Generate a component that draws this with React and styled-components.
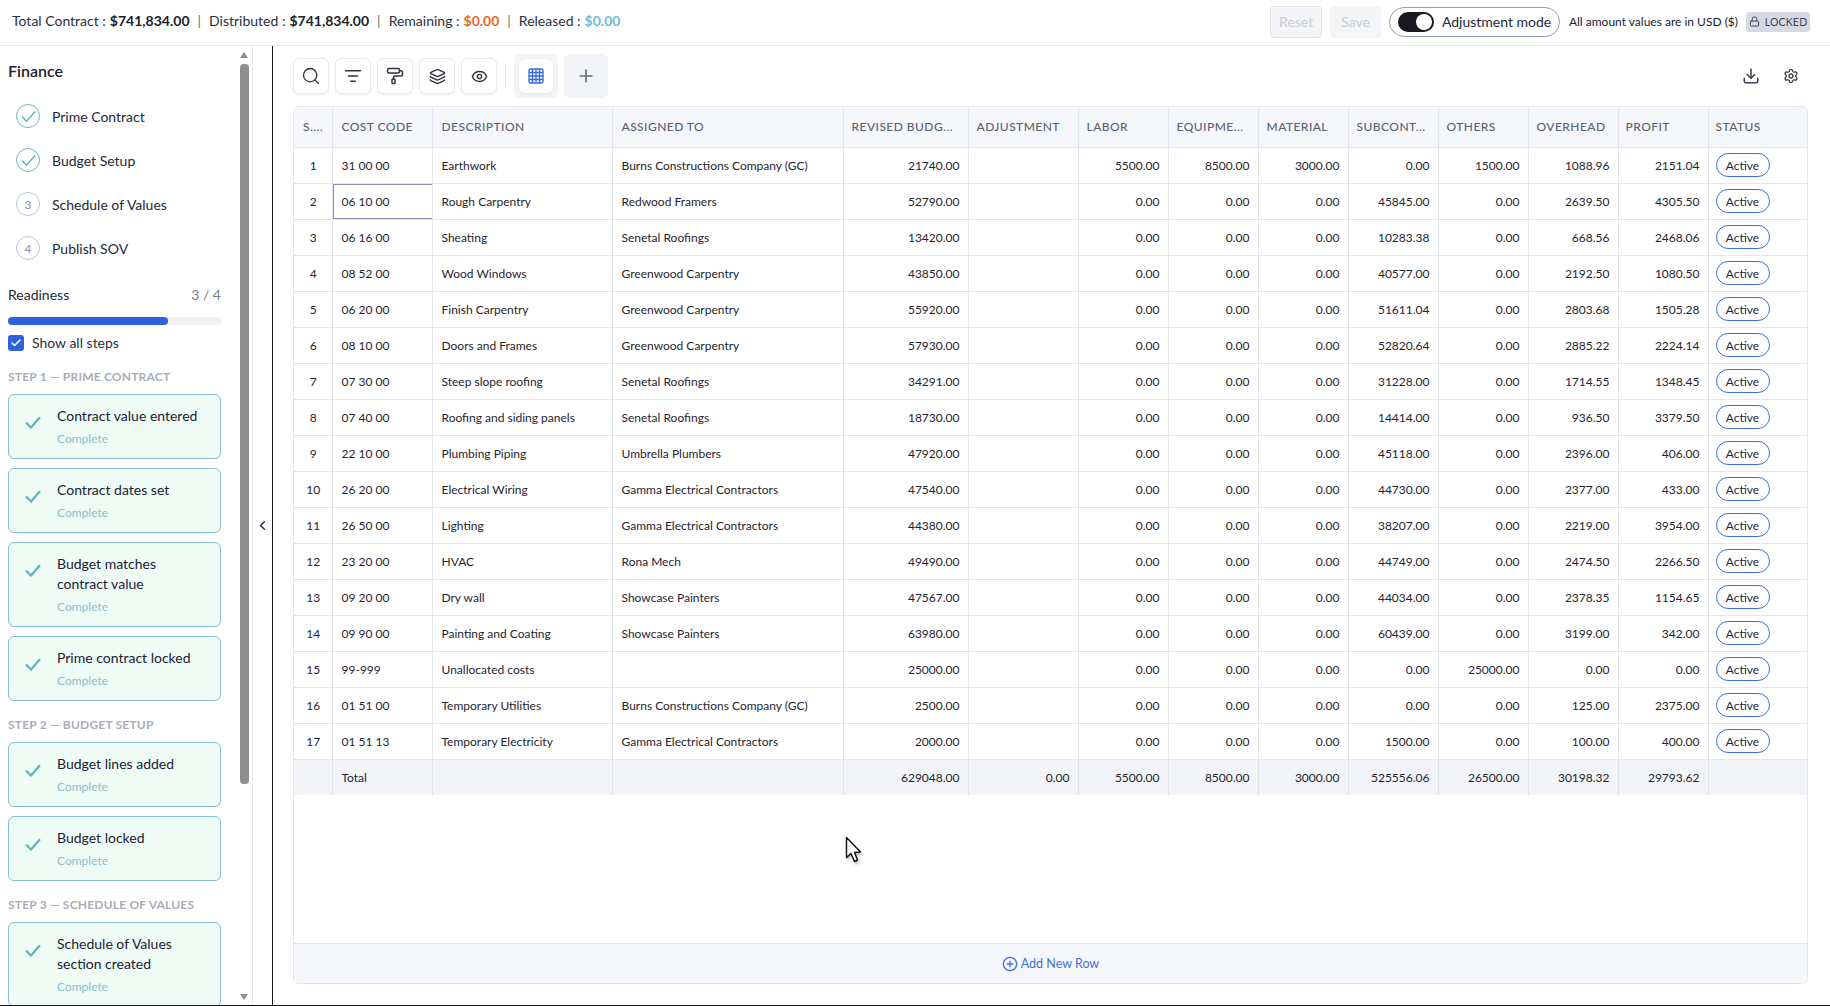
import React from 'react'
import styled, { createGlobalStyle } from 'styled-components'
import {
  Search, ListFilter, PaintRoller, Layers, Eye, Plus, Download, Settings,
  Lock, ChevronLeft, Check, CirclePlus,
} from 'lucide-react'

const rows = [
  ['31 00 00', 'Earthwork', 'Burns Constructions Company (GC)', '21740.00', '5500.00', '8500.00', '3000.00', '0.00', '1500.00', '1088.96', '2151.04'],
  ['06 10 00', 'Rough Carpentry', 'Redwood Framers', '52790.00', '0.00', '0.00', '0.00', '45845.00', '0.00', '2639.50', '4305.50'],
  ['06 16 00', 'Sheating', 'Senetal Roofings', '13420.00', '0.00', '0.00', '0.00', '10283.38', '0.00', '668.56', '2468.06'],
  ['08 52 00', 'Wood Windows', 'Greenwood Carpentry', '43850.00', '0.00', '0.00', '0.00', '40577.00', '0.00', '2192.50', '1080.50'],
  ['06 20 00', 'Finish Carpentry', 'Greenwood Carpentry', '55920.00', '0.00', '0.00', '0.00', '51611.04', '0.00', '2803.68', '1505.28'],
  ['08 10 00', 'Doors and Frames', 'Greenwood Carpentry', '57930.00', '0.00', '0.00', '0.00', '52820.64', '0.00', '2885.22', '2224.14'],
  ['07 30 00', 'Steep slope roofing', 'Senetal Roofings', '34291.00', '0.00', '0.00', '0.00', '31228.00', '0.00', '1714.55', '1348.45'],
  ['07 40 00', 'Roofing and siding panels', 'Senetal Roofings', '18730.00', '0.00', '0.00', '0.00', '14414.00', '0.00', '936.50', '3379.50'],
  ['22 10 00', 'Plumbing Piping', 'Umbrella Plumbers', '47920.00', '0.00', '0.00', '0.00', '45118.00', '0.00', '2396.00', '406.00'],
  ['26 20 00', 'Electrical Wiring', 'Gamma Electrical Contractors', '47540.00', '0.00', '0.00', '0.00', '44730.00', '0.00', '2377.00', '433.00'],
  ['26 50 00', 'Lighting', 'Gamma Electrical Contractors', '44380.00', '0.00', '0.00', '0.00', '38207.00', '0.00', '2219.00', '3954.00'],
  ['23 20 00', 'HVAC', 'Rona Mech', '49490.00', '0.00', '0.00', '0.00', '44749.00', '0.00', '2474.50', '2266.50'],
  ['09 20 00', 'Dry wall', 'Showcase Painters', '47567.00', '0.00', '0.00', '0.00', '44034.00', '0.00', '2378.35', '1154.65'],
  ['09 90 00', 'Painting and Coating', 'Showcase Painters', '63980.00', '0.00', '0.00', '0.00', '60439.00', '0.00', '3199.00', '342.00'],
  ['99-999', 'Unallocated costs', '', '25000.00', '0.00', '0.00', '0.00', '0.00', '25000.00', '0.00', '0.00'],
  ['01 51 00', 'Temporary Utilities', 'Burns Constructions Company (GC)', '2500.00', '0.00', '0.00', '0.00', '0.00', '0.00', '125.00', '2375.00'],
  ['01 51 13', 'Temporary Electricity', 'Gamma Electrical Contractors', '2000.00', '0.00', '0.00', '0.00', '1500.00', '0.00', '100.00', '400.00'],
]

const totals = ['629048.00', '0.00', '5500.00', '8500.00', '3000.00', '525556.06', '26500.00', '30198.32', '29793.62']
const widths = [38, 100, 180, 231, 125, 110, 90, 90, 90, 90, 90, 90, 90, 99]
const headers = ['S....', 'COST CODE', 'DESCRIPTION', 'ASSIGNED TO', 'REVISED BUDG...', 'ADJUSTMENT', 'LABOR', 'EQUIPME...', 'MATERIAL', 'SUBCONT...', 'OTHERS', 'OVERHEAD', 'PROFIT', 'STATUS']

const steps = [
  { label: 'Prime Contract', done: true },
  { label: 'Budget Setup', done: true },
  { label: 'Schedule of Values', num: 3 },
  { label: 'Publish SOV', num: 4 },
]

const groups = [
  { title: 'STEP 1 — PRIME CONTRACT', cards: ['Contract value entered', 'Contract dates set', 'Budget matches contract value', 'Prime contract locked'] },
  { title: 'STEP 2 — BUDGET SETUP', cards: ['Budget lines added', 'Budget locked'] },
  { title: 'STEP 3 — SCHEDULE OF VALUES', cards: ['Schedule of Values section created'] },
]

const GlobalStyle = createGlobalStyle`
  html, body { margin: 0; padding: 0; background: #fff; overflow: hidden; }
  * { box-sizing: border-box; }
  body { font-family: Lato, "Liberation Sans", sans-serif; color: #1f2433; }
`

const Page = styled.div`
  position: relative;
  width: 1830px;
  height: 1006px;
  display: flex;
  flex-direction: column;
  overflow: hidden;
  border-bottom: 1px solid #14161c;
`
const TopBar = styled.header`
  height: 46px;
  flex: none;
  display: flex;
  align-items: center;
  padding: 0 20px 2px 12px;
  border-bottom: 1px solid #e6e8ef;
`
const Summary = styled.div`
  flex: 1;
  display: flex;
  align-items: center;
  padding-bottom: 2px;
  font-size: 14px;
  color: #2b3040;
`
const Amount = styled.b`
  font-weight: 700;
  margin-left: 4px;
  color: ${(p) => p.$color || '#1c2130'};
`
const Sep = styled.span`
  margin: 0 8px;
  color: #6b7280;
`
const ActionButton = styled.div`
  height: 32px;
  padding: 0 ${(p) => (p.$outlined ? 8 : 10)}px;
  margin-right: 8px;
  display: flex;
  align-items: center;
  font-size: 14px;
  color: #c9ccd3;
  background: #f4f5f7;
  border-radius: 4px;
  border: 1px solid ${(p) => (p.$outlined ? '#dfe2e9' : '#f4f5f7')};
`
const ModePill = styled.div`
  height: 30px;
  width: 171px;
  display: flex;
  align-items: center;
  gap: 8px;
  padding-left: 8px;
  border: 1px solid #93a0bb;
  border-radius: 15px;
  font-size: 14px;
  white-space: nowrap;
  color: #20283a;
`
const Switch = styled.span`
  width: 36px;
  height: 20px;
  flex: none;
  border-radius: 10px;
  background: #16181d;
  display: flex;
  align-items: center;
  justify-content: flex-end;
  padding-right: 2px;
`
const Knob = styled.span`
  width: 16px;
  height: 16px;
  border-radius: 50%;
  background: #fff;
`
const UsdNote = styled.div`
  margin-left: 9px;
  font-size: 12px;
  color: #1c2130;
`
const LockedBadge = styled.div`
  margin-left: 8px;
  height: 20px;
  width: 64px;
  display: flex;
  align-items: center;
  justify-content: center;
  gap: 5px;
  background: #d5d9e3;
  border-radius: 3px;
  font-size: 10.5px;
  letter-spacing: 0.2px;
  color: #3b4254;
`
const Body = styled.div`
  flex: 1;
  min-height: 0;
  display: flex;
`
const Sidebar = styled.aside`
  width: 253px;
  flex: none;
  display: flex;
  border-right: 1px solid #e8eaf1;
`
const SideContent = styled.div`
  width: 240px;
  flex: none;
  overflow: hidden;
  padding: 15px 19px 0 8px;
`
const ScrollTrack = styled.div`
  width: 12px;
  display: flex;
  flex-direction: column;
  align-items: flex-start;
  padding-top: 6px;
`
const ArrowUp = styled.span`
  width: 0;
  height: 0;
  border-left: 4.5px solid transparent;
  border-right: 4.5px solid transparent;
  border-bottom: 6px solid #8f8f8f;
`
const ArrowDown = styled.span`
  width: 0;
  height: 0;
  margin-top: auto;
  margin-bottom: 5px;
  border-left: 4.5px solid transparent;
  border-right: 4.5px solid transparent;
  border-top: 6px solid #8f8f8f;
`
const ScrollThumb = styled.div`
  width: 9px;
  height: 720px;
  margin-top: 6px;
  background: #8f8f8f;
  border-radius: 4px;
`
const SideTitle = styled.h2`
  margin: 0 0 23px;
  font-size: 16px;
  line-height: 20px;
  font-weight: 600;
  color: #1c2130;
`
const StepList = styled.div`
  display: flex;
  flex-direction: column;
  gap: 20px;
`
const StepRow = styled.div`
  height: 24px;
  display: flex;
  align-items: center;
  gap: 12px;
  padding-left: 8px;
  font-size: 14px;
  color: #232838;
`
const StepDot = styled.span`
  width: 24px;
  height: 24px;
  flex: none;
  border-radius: 50%;
  display: flex;
  align-items: center;
  justify-content: center;
  font-size: 12px;
  color: #8b92a3;
  border: 1px solid ${(p) => (p.$done ? '#6bb7bd' : '#b9c6dc')};
`
const ReadyRow = styled.div`
  margin-top: 26px;
  display: flex;
  justify-content: space-between;
  font-size: 14px;
  line-height: 18px;
  color: #232838;
`
const ReadyCount = styled.span`
  color: #767d8c;
`
const ProgressTrack = styled.div`
  margin-top: 13px;
  height: 8px;
  border-radius: 4px;
  background: #f1f2f5;
`
const ProgressFill = styled.div`
  height: 100%;
  border-radius: 4px;
  background: #2f62dc;
`
const ShowRow = styled.label`
  margin: 9px 0 18px;
  display: flex;
  align-items: center;
  gap: 8px;
  font-size: 14px;
  height: 17px;
  color: #2b3040;
`
const CheckBox = styled.span`
  width: 16px;
  height: 16px;
  border-radius: 3px;
  background: #2f62dc;
  display: flex;
  align-items: center;
  justify-content: center;
  color: #fff;
`
const GroupTitle = styled.div`
  margin: 16px 0 9px;
  font-size: 12px;
  line-height: 16px;
  font-weight: 700;
  letter-spacing: 0.2px;
  color: #a9adb9;
`
const CardList = styled.div`
  display: flex;
  flex-direction: column;
  gap: 9px;
`
const Card = styled.div`
  display: flex;
  gap: 16px;
  padding: 11px 20px 11px 16px;
  background: #effcf5;
  border: 1px solid #86bfce;
  border-radius: 6px;
`
const CheckWrap = styled.span`
  flex: none;
  display: flex;
  margin-top: 10px;
  height: 13px;
`
const CardText = styled.div`
  min-width: 0;
`
const CardTitle = styled.div`
  font-size: 14px;
  line-height: 20px;
  color: #1b2036;
`
const CardStatus = styled.div`
  margin-top: 5px;
  font-size: 12px;
  line-height: 16px;
  color: #8dbccb;
`
const Collapse = styled.div`
  width: 19px;
  flex: none;
  display: flex;
  align-items: center;
  justify-content: center;
  color: #27345c;
`
const Main = styled.main`
  flex: 1;
  min-width: 0;
  display: flex;
  flex-direction: column;
  padding: 8px 22px 21px 20px;
  border-left: 1px solid #14161c;
`
const Toolbar = styled.div`
  height: 44px;
  flex: none;
  margin-bottom: 8px;
  display: flex;
  align-items: center;
  gap: 6px;
`
const ToolButton = styled.div`
  width: ${(p) => (p.$active ? 34 : 36)}px;
  height: ${(p) => (p.$active ? 34 : 36)}px;
  display: flex;
  align-items: center;
  justify-content: center;
  background: #fff;
  border: ${(p) => (p.$active ? 'none' : '1px solid #e8eaf0')};
  border-radius: 6px;
  box-shadow: 0 1px 2px rgba(40, 50, 80, 0.08);
  color: #30353f;
`
const Divider = styled.span`
  width: 1px;
  height: 24px;
  margin: 0 2px;
  background: #e8eaf0;
`
const ToolGroup = styled.div`
  width: 44px;
  height: 44px;
  display: flex;
  align-items: center;
  justify-content: center;
  background: #f3f4f7;
  border-radius: 6px;
  color: #666c78;
`
const ToolEnd = styled.div`
  margin-left: auto;
  display: flex;
  align-items: center;
  gap: 23px;
  padding-right: 9px;
  color: #3a404c;
`
const TableCard = styled.div`
  flex: 1;
  min-height: 0;
  display: flex;
  flex-direction: column;
  border: 1px solid #e4e6ef;
  border-radius: 6px;
  overflow: hidden;
`
const TableArea = styled.div`
  flex: 1;
  min-height: 0;
`
const Grid = styled.table`
  width: 100%;
  table-layout: fixed;
  border-collapse: collapse;
  font-size: 12px;
  color: #1f2430;
`
const Th = styled.th`
  height: 40px;
  padding: 0 8px;
  text-align: left;
  font-size: 12px;
  font-weight: 500;
  letter-spacing: 0.45px;
  white-space: nowrap;
  overflow: hidden;
  color: #5a6272;
  background: #f6f7fa;
  border: 1px solid #e4e6ef;
  border-top: none;
  &:first-child { border-left: none; }
  &:last-child { border-right: none; }
  &:nth-child(-n+4) { padding-left: 9px; }
  &:nth-child(n+13) { padding-left: 7px; }
`
const Td = styled.td`
  height: 36px;
  padding: 0 8px;
  white-space: nowrap;
  overflow: hidden;
  text-align: ${(p) => p.$align || 'left'};
  border: 1px solid #e4e6ef;
  &:first-child { border-left: none; }
  &:last-child { border-right: none; }
  &:nth-child(-n+4) { padding-left: 9px; }
  &:last-child { padding-left: 7px; }
  ${(p) => p.$selected && 'box-shadow: inset 1px 1px 0 #8e90b5, inset 0 -1px 0 #8e90b5;'}
`
const TotalRow = styled.tr`
  background: #f3f4f7;
  color: #20242f;
  td { border-bottom: none; border-color: #e1e3ea; }
`
const StatusPill = styled.span`
  display: inline-flex;
  align-items: center;
  justify-content: center;
  width: 54px;
  height: 24px;
  border: 1px solid #3b6fdc;
  border-radius: 12px;
  color: #232a3a;
`
const AddRow = styled.div`
  height: 40px;
  flex: none;
  display: flex;
  align-items: center;
  justify-content: center;
  gap: 3px;
  font-size: 12.5px;
  color: #3f6fdc;
  background: #f6f7fa;
  border-top: 1px solid #e4e6ef;
`
const Cursor = styled.svg`
  position: absolute;
  left: 845px;
  top: 836px;
  filter: drop-shadow(1px 2px 1px rgba(0, 0, 0, 0.25));
`

const GridIcon = () => (
  <svg width="16" height="16" viewBox="0 0 16 16" fill="none" stroke="#3467e0" strokeWidth="1.3">
    <rect x="1" y="1" width="14" height="14" rx="1.5" />
    <path d="M4.5 1v14M8 1v14M11.5 1v14M1 4.5h14M1 8h14M1 11.5h14" />
  </svg>
)

const TealCheck = ({ width = 16, weight = 2.2 }) => (
  <svg width={width} height="13" viewBox="0 0 16 13" fill="none" stroke="#62b3b8" strokeWidth={weight}>
    <path d="M1 6.5 L6 11.5 L15 1.2" />
  </svg>
)

function App() {
  return (
    <Page>
      <GlobalStyle />
      <TopBar>
        <Summary>
          Total Contract :<Amount>$741,834.00</Amount>
          <Sep>|</Sep>
          Distributed :<Amount>$741,834.00</Amount>
          <Sep>|</Sep>
          Remaining :<Amount $color="#ea6a1c">$0.00</Amount>
          <Sep>|</Sep>
          Released :<Amount $color="#6fbcdc">$0.00</Amount>
        </Summary>
        <ActionButton $outlined>Reset</ActionButton>
        <ActionButton>Save</ActionButton>
        <ModePill>
          <Switch><Knob /></Switch>
          Adjustment mode
        </ModePill>
        <UsdNote>All amount values are in USD ($)</UsdNote>
        <LockedBadge><Lock size={11} />LOCKED</LockedBadge>
      </TopBar>
      <Body>
        <Sidebar>
          <SideContent>
            <SideTitle>Finance</SideTitle>
            <StepList>
              {steps.map((s) => (
                <StepRow key={s.label}>
                  <StepDot $done={s.done}>
                    {s.done ? <TealCheck width={15} weight={1.6} /> : s.num}
                  </StepDot>
                  {s.label}
                </StepRow>
              ))}
            </StepList>
            <ReadyRow>Readiness<ReadyCount>3 / 4</ReadyCount></ReadyRow>
            <ProgressTrack><ProgressFill style={{ width: '75%' }} /></ProgressTrack>
            <ShowRow>
              <CheckBox><Check size={12} strokeWidth={3} /></CheckBox>
              Show all steps
            </ShowRow>
            {groups.map((g) => (
              <div key={g.title}>
                <GroupTitle>{g.title}</GroupTitle>
                <CardList>
                  {g.cards.map((c) => (
                    <Card key={c}>
                      <CheckWrap><TealCheck /></CheckWrap>
                      <CardText>
                        <CardTitle>{c}</CardTitle>
                        <CardStatus>Complete</CardStatus>
                      </CardText>
                    </Card>
                  ))}
                </CardList>
              </div>
            ))}
          </SideContent>
          <ScrollTrack>
            <ArrowUp />
            <ScrollThumb />
            <ArrowDown />
          </ScrollTrack>
        </Sidebar>
        <Collapse><ChevronLeft size={15} strokeWidth={2.5} /></Collapse>
        <Main>
          <Toolbar>
            <ToolButton><Search size={20} strokeWidth={1.6} /></ToolButton>
            <ToolButton><ListFilter size={18} /></ToolButton>
            <ToolButton><PaintRoller size={18} /></ToolButton>
            <ToolButton><Layers size={17} /></ToolButton>
            <ToolButton><Eye size={17} /></ToolButton>
            <Divider />
            <ToolGroup><ToolButton $active><GridIcon /></ToolButton></ToolGroup>
            <ToolGroup><Plus size={20} /></ToolGroup>
            <ToolEnd>
              <Download size={18} />
              <Settings size={16} />
            </ToolEnd>
          </Toolbar>
          <TableCard>
            <TableArea>
              <Grid>
                <colgroup>
                  {widths.map((w, i) => <col key={i} style={{ width: w }} />)}
                </colgroup>
                <thead>
                  <tr>{headers.map((h) => <Th key={h}>{h}</Th>)}</tr>
                </thead>
                <tbody>
                  {rows.map((r, i) => (
                    <tr key={i}>
                      <Td $align="center">{i + 1}</Td>
                      <Td $selected={i === 1}>{r[0]}</Td>
                      <Td>{r[1]}</Td>
                      <Td>{r[2]}</Td>
                      <Td $align="right">{r[3]}</Td>
                      <Td />
                      {r.slice(4).map((v, j) => <Td key={j} $align="right">{v}</Td>)}
                      <Td><StatusPill>Active</StatusPill></Td>
                    </tr>
                  ))}
                  <TotalRow>
                    <Td />
                    <Td>Total</Td>
                    <Td />
                    <Td />
                    {totals.map((v, j) => <Td key={j} $align="right">{v}</Td>)}
                    <Td />
                  </TotalRow>
                </tbody>
              </Grid>
            </TableArea>
            <AddRow><CirclePlus size={16} />Add New Row</AddRow>
          </TableCard>
        </Main>
      </Body>
      <Cursor width="20" height="28" viewBox="0 0 20 28">
        <path d="M1.5 1.5 L1.5 21.5 L6 17.5 L9.5 25.5 L12.5 24 L9.5 16.5 L15.5 16 Z" fill="#fff" stroke="#111" strokeWidth="1.4" strokeLinejoin="round" />
      </Cursor>
    </Page>
  )
}

export default App
